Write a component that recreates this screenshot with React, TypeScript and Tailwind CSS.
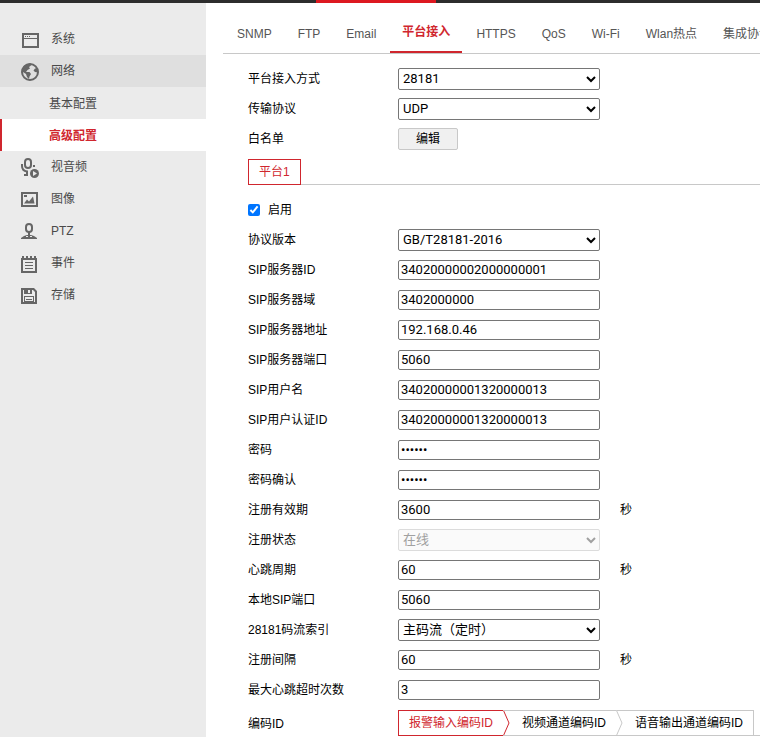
import { ReactNode, useState } from "react";

type FieldProps = { label: string; id: string };

const tabs = [
  "SNMP",
  "FTP",
  "Email",
  "平台接入",
  "HTTPS",
  "QoS",
  "Wi-Fi",
  "Wlan热点",
  "集成协议",
];

function SystemIcon() {
  return (
    <svg width="20" height="20" viewBox="0 -1 20 20" fill="currentColor">
      <path fillRule="evenodd" d="M1 2h17v15H1zM3 4h13v11H3z" />
      <path d="M3 7h13v1H3zM4 5h1v1H4zM6 5h1v1H6zM8 5h1v1H8z" />
    </svg>
  );
}

function NetworkIcon() {
  return (
    <svg width="20" height="20" viewBox="0 0 20 20">
      <circle cx="9" cy="10" r="8" fill="none" stroke="currentColor" strokeWidth="2" />
      <path
        fill="currentColor"
        d="M1 9.500C1 5 4 2 9 1.500l1 2L8 5l1 1.500L6.500 8 5 10h3.500L10 12l-1.500 2.500L8 17l-2-2-1-3-3-2zM17 6l-3 .5-1.500 2L14 10l3 .5z"
      />
    </svg>
  );
}

function MediaIcon() {
  return (
    <svg width="20" height="20" viewBox="0 0 20 20" fill="none" stroke="currentColor">
      <rect x="4" y="1" width="6" height="9" rx="3" strokeWidth="2" />
      <path d="M1 6v2c0 3 2 5 5 5.500h1" strokeWidth="2" />
      <path d="M12 7h2v2h-2zM3 16h4v2H3zM5 13h2v3H5z" fill="currentColor" stroke="none" />
      <circle cx="13.500" cy="15.500" r="4.500" fill="currentColor" stroke="none" />
      <path d="M12 13l4 2.500-4 2.500z" fill="#ebebeb" stroke="none" />
    </svg>
  );
}

function ImageIcon() {
  return (
    <svg width="20" height="20" viewBox="0 0 20 20" fill="currentColor">
      <path fillRule="evenodd" d="M0 2h17v15H0zM2 4h13v11H2z" />
      <path d="M3 13.500l3-4 2 2 4-5 1.500 7zM3 5h3v2H3z" />
    </svg>
  );
}

function PtzIcon() {
  return (
    <svg width="20" height="20" viewBox="0 0 20 20" fill="none" stroke="currentColor">
      <rect x="5" y="2" width="6" height="8" rx="3" strokeWidth="2" />
      <path d="M8 10v3" strokeWidth="2" />
      <path d="M0 17v-1l3-2 3-1h4l3 1 3 2v1z" fill="currentColor" stroke="none" />
      <path d="M5 14.500h2M9 14.500h2" stroke="#ebebeb" />
    </svg>
  );
}

function EventIcon() {
  return (
    <svg width="20" height="20" viewBox="0 -1 20 20" fill="currentColor">
      <path fillRule="evenodd" d="M0 3h16v15H0zM2 5h12v11H2z" />
      <path d="M1 1h2v2H1zM5 1h2v2H5zM9 1h2v2H9zM13 1h2v2h-2zM4 7h8v1H4zM4 10h8v1H4zM4 13h8v1H4z" />
    </svg>
  );
}

function StorageIcon() {
  return (
    <svg width="20" height="20" viewBox="0 -1 20 20" fill="currentColor">
      <path fillRule="evenodd" d="M0 1h13l3 3v13H0zM2 3v12h12V5l-2-2z" />
      <path d="M3 2h8v5H3z" />
      <path d="M7 3h2v3H7z" fill="#ebebeb" />
      <path fillRule="evenodd" d="M3 9h10v6H3zM4 10v4h8v-4z" />
      <path d="M5 12h6v1H5z" />
    </svg>
  );
}

function NavItem({
  icon,
  children,
  active,
}: {
  icon: ReactNode;
  children: ReactNode;
  active?: boolean;
}) {
  return (
    <a
      href="#"
      className={`flex h-8 items-center gap-[10px] pl-[21px] text-[#4a4a4a] ${active ? "bg-[#dfdfdf]" : ""}`}
    >
      <span className="pt-[2px] text-[#666]">{icon}</span>
      {children}
    </a>
  );
}

function Row({
  label,
  id,
  unit,
  children,
}: FieldProps & { unit?: string; children: ReactNode }) {
  return (
    <div className="flex h-[30px] items-center">
      <label htmlFor={id} className="w-[150px] shrink-0">
        {label}
      </label>
      {children}
      {unit && <span className="ml-5">{unit}</span>}
    </div>
  );
}

function TextRow({
  label,
  id,
  value,
  unit,
  type = "text",
}: FieldProps & { value: string; unit?: string; type?: string }) {
  return (
    <Row label={label} id={id} unit={unit}>
      <input
        id={id}
        type={type}
        defaultValue={value}
        className="h-5 w-[202px] rounded-[2px] border border-[#767676] bg-white px-[2px] pb-[2px] font-[Roboto,'Noto_Sans_CJK_SC',sans-serif] text-[13px]"
      />
    </Row>
  );
}

function SelectRow({
  label,
  id,
  value,
  disabled,
}: FieldProps & { value: string; disabled?: boolean }) {
  return (
    <Row label={label} id={id}>
      <select
        id={id}
        disabled={disabled}
        className="h-[22px] w-[202px] rounded-[2px] border border-[#767676] bg-white pb-[2px] font-[Roboto,'Noto_Sans_CJK_SC',sans-serif] text-[13px] disabled:border-[#dcdcdc] disabled:bg-[#fafafa] disabled:text-[#a0a0a0]"
      >
        <option>{value}</option>
      </select>
    </Row>
  );
}

function StepArrow({ className }: { className: string }) {
  return (
    <svg width="7" height="26" viewBox="0 0 7 26" fill="none" className={className}>
      <path d="M0.500 0.500L6 13L0.500 25.500" stroke="currentColor" />
    </svg>
  );
}

export default function App() {
  const [enabled, setEnabled] = useState(true);

  return (
    <div className="flex min-h-screen flex-col overflow-hidden bg-white font-['Liberation_Sans','Noto_Sans_CJK_SC',sans-serif] text-[12px] text-black">
      <div className="h-[3px] bg-[#2d2d2d]">
        <div className="ml-[316px] h-full w-[120px] bg-[#dd1820]" />
      </div>

      <div className="flex flex-1">
        <nav className="w-[206px] shrink-0 bg-[#ebebeb] pt-5">
          <NavItem icon={<SystemIcon />}>系统</NavItem>
          <NavItem icon={<NetworkIcon />} active>
            网络
          </NavItem>
          <a href="#" className="flex h-8 items-center pt-[2px] pl-[49px] text-[#4a4a4a]">
            基本配置
          </a>
          <a
            href="#"
            className="flex h-8 items-center border-l-2 border-[#d0262e] bg-white pt-[2px] pl-[47px] font-bold text-[#d0262e]"
          >
            高级配置
          </a>
          <NavItem icon={<MediaIcon />}>视音频</NavItem>
          <NavItem icon={<ImageIcon />}>图像</NavItem>
          <NavItem icon={<PtzIcon />}>PTZ</NavItem>
          <NavItem icon={<EventIcon />}>事件</NavItem>
          <NavItem icon={<StorageIcon />}>存储</NavItem>
        </nav>

        <main className="min-w-0 flex-1 pl-[17px]">
          <div className="flex h-[51px] gap-[2px] overflow-hidden border-b border-[#c8c8c8] pt-[10px] pl-[2px] whitespace-nowrap">
            {tabs.map((tab) => (
              <button
                key={tab}
                type="button"
                className={
                  tab === "平台接入"
                    ? "shrink-0 border-b-2 border-[#d0262e] px-3 font-bold text-[#d0262e]"
                    : "shrink-0 px-3 pt-[2px] text-[#555]"
                }
              >
                {tab}
              </button>
            ))}
          </div>

          <form className="pt-[10px] pl-[25px]">
            <SelectRow label="平台接入方式" id="access" value="28181" />
            <SelectRow label="传输协议" id="transport" value="UDP" />
            <Row label="白名单" id="whitelist">
              <button
                id="whitelist"
                type="button"
                className="h-[22px] w-[60px] rounded-[2px] border border-[#c8c8c8] bg-[#f0f0f0]"
              >
                编辑
              </button>
            </Row>

            <div className="mt-[5px] flex h-[26px] border-b border-[#c8c8c8]">
              <button
                type="button"
                className="h-[26px] shrink-0 border border-[#d0262e] bg-white px-[10px] text-[#d0262e]"
              >
                平台1
              </button>
            </div>

            <label className="mt-[10px] flex h-[30px] items-center gap-2">
              <input
                type="checkbox"
                checked={enabled}
                onChange={() => setEnabled(!enabled)}
                className="size-3 accent-[#0075ff]"
              />
              启用
            </label>

            <SelectRow label="协议版本" id="version" value="GB/T28181-2016" />
            <TextRow label="SIP服务器ID" id="server-id" value="34020000002000000001" />
            <TextRow label="SIP服务器域" id="server-domain" value="3402000000" />
            <TextRow label="SIP服务器地址" id="server-address" value="192.168.0.46" />
            <TextRow label="SIP服务器端口" id="server-port" value="5060" />
            <TextRow label="SIP用户名" id="user" value="34020000001320000013" />
            <TextRow label="SIP用户认证ID" id="auth-id" value="34020000001320000013" />
            <TextRow label="密码" id="password" type="password" value="123456" />
            <TextRow label="密码确认" id="confirm" type="password" value="123456" />
            <TextRow label="注册有效期" id="expires" value="3600" unit="秒" />
            <SelectRow label="注册状态" id="status" value="在线" disabled />
            <TextRow label="心跳周期" id="heartbeat" value="60" unit="秒" />
            <TextRow label="本地SIP端口" id="local-port" value="5060" />
            <SelectRow label="28181码流索引" id="stream" value="主码流（定时）" />
            <TextRow label="注册间隔" id="interval" value="60" unit="秒" />
            <TextRow label="最大心跳超时次数" id="timeouts" value="3" />

            <div className="flex items-center pt-[5px]">
              <span className="w-[150px] shrink-0 pt-[2px]">编码ID</span>
              <div className="flex h-[26px] flex-1 border-b border-[#c8c8c8] whitespace-nowrap">
                <button
                  type="button"
                  className="h-[26px] border-y border-l border-[#d0262e] px-[10px] text-[#d0262e]"
                >
                  报警输入编码ID
                </button>
                <StepArrow className="shrink-0 text-[#d0262e]" />
                <button
                  type="button"
                  className="-ml-[7px] h-[26px] border-y border-[#c8c8c8] pr-[10px] pl-[19px] [clip-path:polygon(0_0,100%_0,100%_100%,0_100%,6px_50%)]"
                >
                  视频通道编码ID
                </button>
                <StepArrow className="shrink-0 text-[#c8c8c8]" />
                <button
                  type="button"
                  className="-ml-[7px] h-[26px] border-y border-r border-[#c8c8c8] pr-[10px] pl-[19px] [clip-path:polygon(0_0,100%_0,100%_100%,0_100%,6px_50%)]"
                >
                  语音输出通道编码ID
                </button>
              </div>
            </div>
          </form>
        </main>
      </div>
    </div>
  );
}
